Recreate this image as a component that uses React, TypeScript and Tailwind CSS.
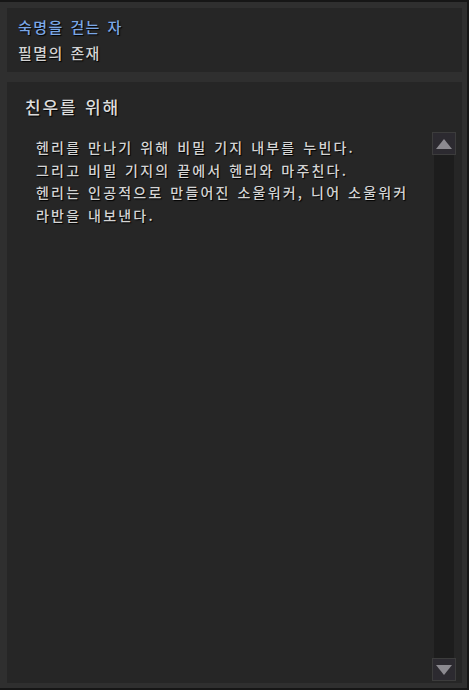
import { ReactNode } from 'react';

const font = { fontFamily: '"Noto Sans CJK KR", "Noto Sans", sans-serif' };

function Panel({ children, className }: { children: ReactNode; className?: string }) {
  return <div className={`bg-[#262626] ${className ?? ''}`}>{children}</div>;
}

const lines = [
  '헨리를 만나기 위해 비밀 기지 내부를 누빈다.',
  '그리고 비밀 기지의 끝에서 헨리와 마주친다.',
  '헨리는 인공적으로 만들어진 소울워커, 니어 소울워커',
  '라반을 내보낸다.',
];

export default function App() {
  return (
    <div
      style={font}
      className="flex h-[690px] w-[469px] flex-col border-t-2 border-r-2 border-b-2 border-[#161616] bg-[#2f2f2f] pt-[6px] pr-[5px] pb-[5px] pl-[7px] font-medium [text-shadow:1px_1px_1px_#000]"
    >
      <Panel className="flex h-[64px] flex-col justify-center gap-[6px] pl-[11px] tracking-[1.4px] [word-spacing:2px]">
        <div className="text-[15px] leading-[20px] text-[#7aa7e6]">숙명을 걷는 자</div>
        <div className="text-[15px] leading-[20px] text-[#d2d2d2]">필멸의 존재</div>
      </Panel>
      <Panel className="mt-[10px] flex flex-1 flex-col">
        <div className="pt-[12px] pl-[18px] text-[17px] leading-[26px] tracking-[1.8px] text-[#dcdcdc] [word-spacing:2px]">
          친우를 위해
        </div>
        <div className="flex flex-1 pt-[14px] pb-[2px]">
          <div className="flex-1 pt-[2px] pl-[29px] text-[14px] leading-[22.5px] tracking-[2.2px] text-[#d4d4d4] [word-spacing:1.5px]">
            {lines.map((l) => (
              <div key={l}>{l}</div>
            ))}
          </div>
          <div className="mt-[-2px] mr-[6px] flex w-[24px] flex-col">
            <div className="flex h-[23px] items-center justify-center border border-[#3c3c3c] bg-[#2c2a30]">
              <div className="h-0 w-0 border-x-[8px] border-b-[10px] border-x-transparent border-b-[#8c8a90]" />
            </div>
            <div className="mx-[2px] flex-1 bg-[#1d1d1d]" />
            <div className="flex h-[23px] items-center justify-center border border-[#3c3c3c] bg-[#2c2a30]">
              <div className="h-0 w-0 border-x-[8px] border-t-[10px] border-x-transparent border-t-[#8c8a90]" />
            </div>
          </div>
        </div>
      </Panel>
    </div>
  );
}
